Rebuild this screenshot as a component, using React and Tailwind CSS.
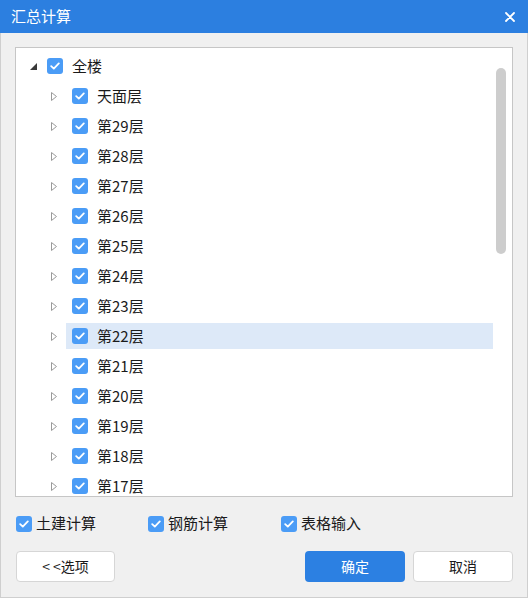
import React from 'react';

const floors = ['天面层', '第29层', '第28层', '第27层', '第26层', '第25层', '第24层', '第23层', '第22层', '第21层', '第20层', '第19层', '第18层', '第17层'];

const font = { fontFamily: '"Microsoft YaHei", "Noto Sans CJK SC", "Noto Sans", sans-serif' };

const Check = () => (
    <span className="flex items-center justify-center w-4 h-4 rounded-[3px] bg-[#4b9cf6] shrink-0">
        <svg width="10" height="8" viewBox="0 0 10 8">
            <path d="M1.2 4.2 L3.8 6.6 L8.8 1.4" fill="none" stroke="white" strokeWidth="1.8" strokeLinecap="round" strokeLinejoin="round" />
        </svg>
    </span>
);

const Row = ({ label, selected }) => (
    <div className="flex items-center h-[26px] shrink-0">
        <span className="w-[30px] flex justify-end pr-[9px]">
            <svg width="6" height="9" viewBox="0 0 6 9">
                <path d="M0.5 0.5 L5.5 4.5 L0.5 8.5 Z" fill="none" stroke="#9a9a9a" strokeWidth="1" />
            </svg>
        </span>
        <div className={`flex items-center h-full flex-1 mr-[2px] pl-[6px] ${selected ? 'bg-[#dde9f8]' : ''}`}>
            <Check />
            <span className="ml-[9px] text-[15px] text-[#1a1a1a]">{label}</span>
        </div>
    </div>
);

export default function App() {
    return (
        <div className="w-[528px] h-[598px] bg-[#f0f0f0] flex flex-col select-none" style={font}>
            <div className="h-[33px] bg-[#2c7fe0] flex items-center justify-between pl-[11px] pr-[13px]">
                <span className="text-white text-[15px]">汇总计算</span>
                <svg width="10" height="10" viewBox="0 0 10 10">
                    <path d="M1 1 L9 9 M9 1 L1 9" stroke="white" strokeWidth="1.8" strokeLinecap="round" />
                </svg>
            </div>

            <div className="flex-1 flex flex-col border-x border-b border-[#cfcfcf] px-[14px]">
                <div className="mt-[14px] h-[450px] shrink-0 border border-[#c6c6c6] bg-white flex overflow-hidden">
                    <div className="flex-1 pt-[5px] flex flex-col gap-[4px] overflow-hidden">
                        <div className="flex items-center h-[26px] shrink-0">
                            <span className="w-[31px] flex justify-end pr-[10px]">
                                <svg width="7" height="7" viewBox="0 0 7 7">
                                    <path d="M7 0 L7 7 L0 7 Z" fill="#3a3a3a" />
                                </svg>
                            </span>
                            <Check />
                            <span className="ml-[9px] text-[15px] text-[#1a1a1a]">全楼</span>
                        </div>
                        <div className="pl-[20px] flex flex-col gap-[4px] shrink-0">
                            {floors.map((f) => (
                                <Row key={f} label={f} selected={f === '第22层'} />
                            ))}
                        </div>
                    </div>
                    <div className="w-[17px] pt-[20px] flex justify-start pl-[1px]">
                        <div className="w-[10px] h-[186px] rounded-full bg-[#cdcdcd]" />
                    </div>
                </div>

                <div className="flex items-center mt-[18px] h-[17px] text-[15px] text-[#1a1a1a]">
                    <label className="flex items-center gap-[4px] w-[133px] pl-[1px] shrink-0 whitespace-nowrap">
                        <Check />
                        <span>土建计算</span>
                    </label>
                    <label className="flex items-center gap-[4px] w-[133px] shrink-0 whitespace-nowrap">
                        <Check />
                        <span>钢筋计算</span>
                    </label>
                    <label className="flex items-center gap-[4px] whitespace-nowrap">
                        <Check />
                        <span>表格输入</span>
                    </label>
                </div>

                <div className="flex items-center mt-[19px] text-[14px]">
                    <button className="w-[99px] h-[31px] ml-[1px] bg-white border border-[#d6d6d6] rounded-[4px] text-[#1a1a1a]">
                        &lt; &lt;选项
                    </button>
                    <div className="flex-1" />
                    <button className="w-[100px] h-[31px] bg-[#2c80e2] rounded-[4px] text-white">
                        确定
                    </button>
                    <button className="w-[100px] h-[31px] ml-[8px] bg-white border border-[#d6d6d6] rounded-[4px] text-[#1a1a1a]">
                        取消
                    </button>
                </div>
            </div>
        </div>
    );
}
